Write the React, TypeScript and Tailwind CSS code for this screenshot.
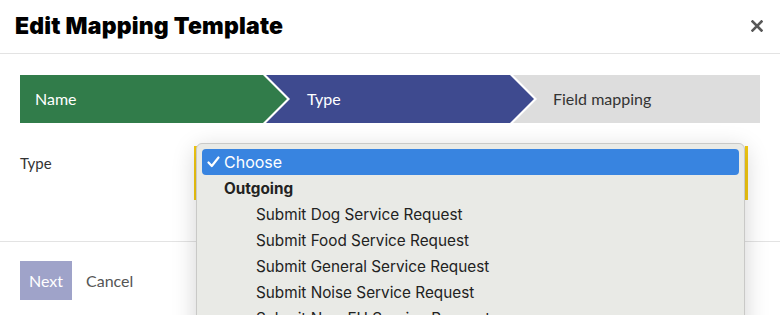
import React from "react";

const items = [
  "Submit Dog Service Request",
  "Submit Food Service Request",
  "Submit General Service Request",
  "Submit Noise Service Request",
  "Submit Non-EH Service Request",
];

export default function App() {
  return (
    <div className="relative w-[780px] h-[315px] overflow-hidden bg-white text-[#333]" style={{ fontFamily: "Lato, 'Open Sans', sans-serif" }}>
      {/* Header */}
      <div className="flex items-center justify-between h-[54px] border-b border-[#e3e3e3] pl-[15px] pr-[17px]">
        <h1 className="text-[23px] font-black text-black tracking-[0.2px]" style={{ fontFamily: "Inter, sans-serif" }}>
          Edit Mapping Template
        </h1>
        <svg width="12" height="12" viewBox="0 0 12 12" className="mt-[-2px]">
          <path d="M1.5 1.5 L10.5 10.5 M10.5 1.5 L1.5 10.5" stroke="#585858" strokeWidth="2.6" strokeLinecap="square" />
        </svg>
      </div>

      {/* Stepper */}
      <div className="flex h-12 mx-5 mt-[21px] text-[16px]">
        <div className="relative z-30 -mr-[24px] w-[270px] shrink-0 h-full bg-white [clip-path:polygon(0_0,calc(100%_-_24px)_0,100%_50%,calc(100%_-_24px)_100%,0_100%)]">
          <div className="flex items-center h-full w-[267px] pl-[15px] bg-[#317c4a] text-white [clip-path:polygon(0_0,calc(100%_-_24px)_0,100%_50%,calc(100%_-_24px)_100%,0_100%)]">
            Name
          </div>
        </div>
        <div className="relative z-20 -mr-[24px] w-[271px] shrink-0 h-full bg-white [clip-path:polygon(0_0,calc(100%_-_24px)_0,100%_50%,calc(100%_-_24px)_100%,0_100%)]">
          <div className="flex items-center h-full w-[268px] pl-[41px] bg-[#3e4a8f] text-white [clip-path:polygon(0_0,calc(100%_-_24px)_0,100%_50%,calc(100%_-_24px)_100%,0_100%)]">
            Type
          </div>
        </div>
        <div className="relative z-10 flex-1 flex items-center h-full pl-[40px] bg-[#dddddd] text-[#333]">
          Field mapping
        </div>
      </div>

      {/* Form row */}
      <div className="flex mt-[23px] pb-[41px] border-b border-[#e3e3e3]">
        <div className="w-[194px] pl-5 pt-[6px] text-[15px] text-[#333]">Type</div>
        <div className="w-[554px] h-[54px] border-x-[3px] border-[#f2c811]" />
      </div>

      {/* Footer */}
      <div className="flex items-center gap-[14px] pl-5 pt-[19px]">
        <div className="flex items-center justify-center w-[52px] h-[39px] bg-[#9fa3c9] text-white text-[16px]">Next</div>
        <div className="text-[16px] text-[#555]">Cancel</div>
      </div>

      {/* Native dropdown (open select popup, overlays the page) */}
      <div
        className="absolute left-[196px] top-[143px] w-[549px] h-[200px] rounded-[6px] border border-[#c9c9c7] bg-[#e9eae6] shadow-[0_6px_24px_rgba(0,0,0,0.18)] px-[5px] pt-[5px] text-[15.3px] text-[#222]"
        style={{ fontFamily: "Inter, 'DejaVu Sans', sans-serif" }}
      >
        <div className="flex items-center h-[26px] rounded-[4px] bg-[#3884e0] text-white pl-[5px]">
          <svg width="13" height="12" viewBox="0 0 13 12" className="mr-[4px]">
            <path d="M1.5 6.5 L4.8 10 L11.5 1.5" stroke="white" strokeWidth="2.2" fill="none" strokeLinecap="round" strokeLinejoin="round" />
          </svg>
          <span className="text-[16px]">Choose</span>
        </div>
        <div className="flex items-center h-[26px] pt-[2px] pl-[22px] font-bold">Outgoing</div>
        {items.map((t) => (
          <div key={t} className="flex items-center h-[26px] pt-[2px] pl-[54px]">{t}</div>
        ))}
      </div>
    </div>
  );
}
